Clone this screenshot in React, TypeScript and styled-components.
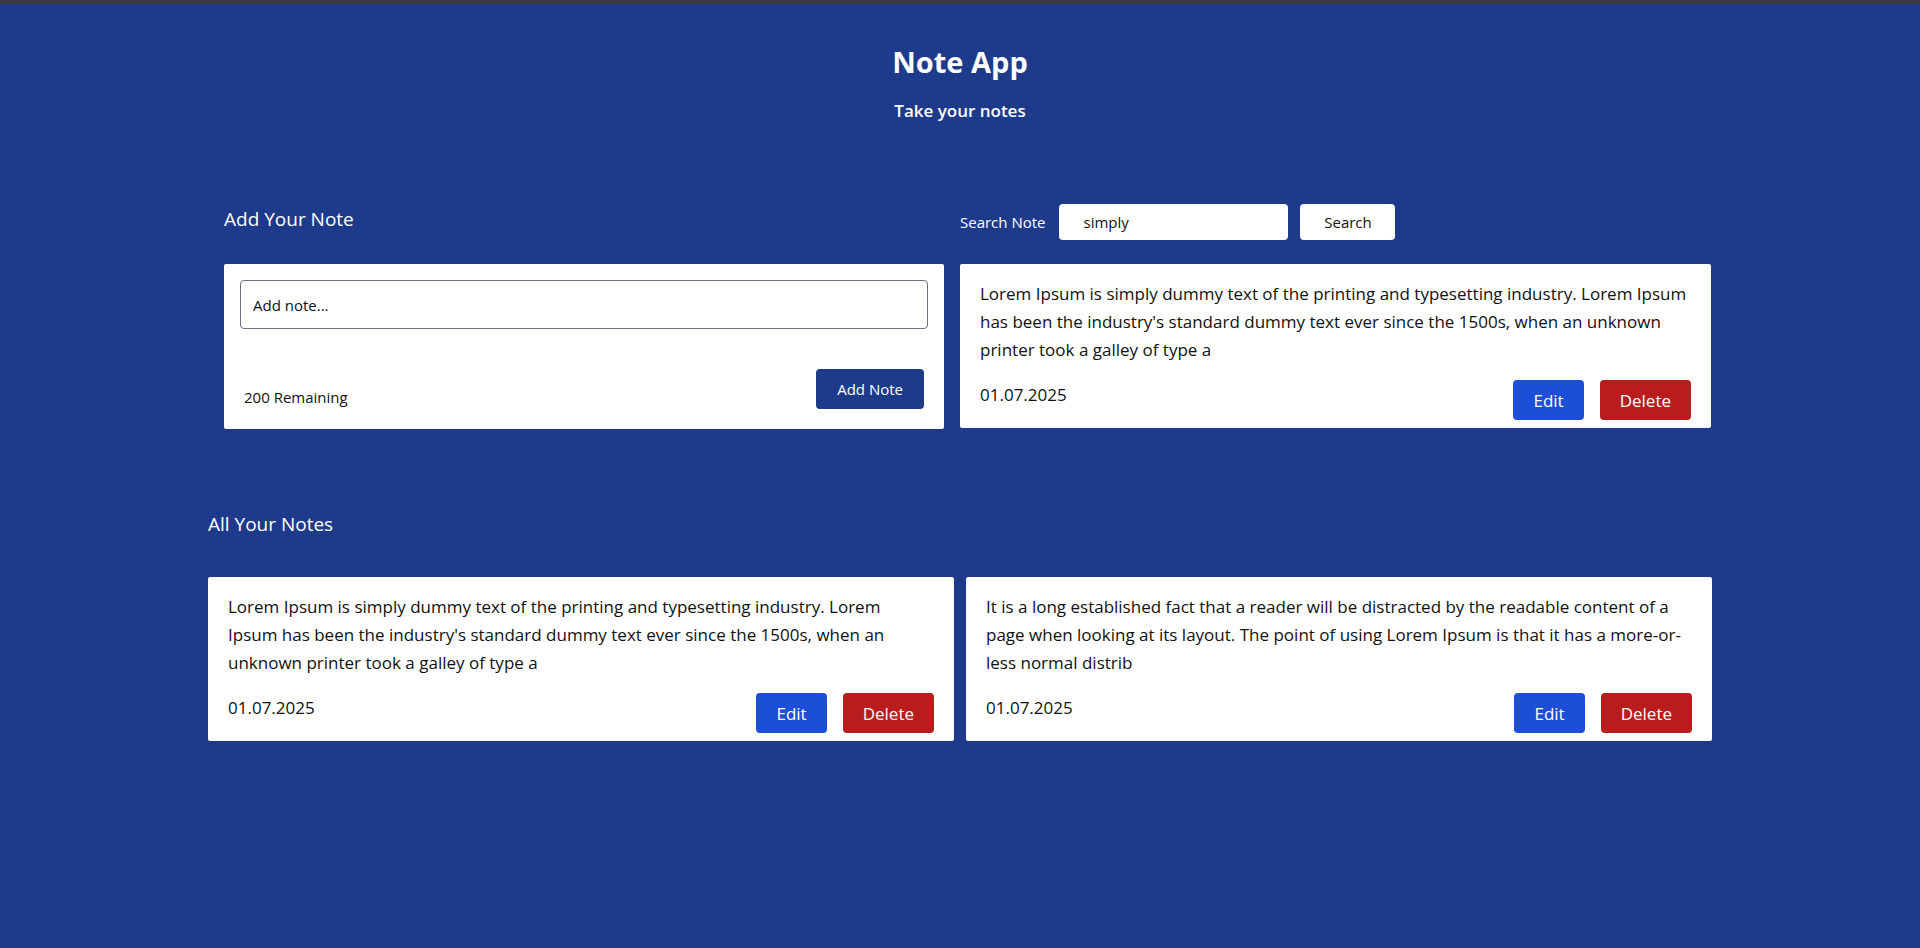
import React from "react";
import styled, { createGlobalStyle } from "styled-components";

const GlobalStyle = createGlobalStyle`
  * { box-sizing: border-box; }
  html, body {
    margin: 0;
    padding: 0;
    background: #1e3a8a;
    font-family: "Open Sans", "Noto Sans", sans-serif;
    color: #ffffff;
  }
  #root { min-height: 948px; }
`;

const TopStrip = styled.div`
  height: 4px;
  background: #3c3c3c;
`;

const Header = styled.header`
  padding-top: 40px;
  text-align: center;
`;

const Title = styled.h1`
  margin: 0;
  font-size: 29px;
  line-height: 36px;
  font-weight: 700;
  color: #ffffff;
`;

const Subtitle = styled.p`
  margin: 17px 0 0;
  font-size: 17px;
  line-height: 28px;
  font-weight: 600;
  color: #ffffff;
`;

const Container = styled.main`
  max-width: 1536px;
  margin: 0 auto;
  padding: 0 16px;
`;

const TopGrid = styled.section`
  margin-top: 79px;
  display: grid;
  grid-template-columns: 1fr 1fr;
  align-items: start;
`;

const Column = styled.div<{ $inset?: boolean }>`
  padding: ${(p) => (p.$inset ? "0 16px" : "0 1px 0 0")};
`;

const ColHead = styled.div`
  height: 36px;
  margin-bottom: 24px;
  display: flex;
  align-items: flex-start;
`;

const SectionTitle = styled.h2`
  margin: 0;
  padding-top: 1px;
  font-size: 19px;
  line-height: 28px;
  font-weight: 400;
  color: #ffffff;
`;

const SearchRow = styled.div`
  display: flex;
  align-items: center;
  height: 36px;
`;

const SearchLabel = styled.label`
  font-size: 15px;
  line-height: 24px;
  color: #ffffff;
  margin-right: 14px;
`;

const SearchInput = styled.input`
  width: 229px;
  height: 36px;
  border: none;
  border-radius: 4px;
  padding: 0 0 0 24px;
  font-family: inherit;
  font-size: 15px;
  color: #111111;
  background: #ffffff;
  outline: none;
`;

const SearchButton = styled.button`
  margin-left: 12px;
  width: 95px;
  height: 36px;
  border: none;
  border-radius: 4px;
  background: #ffffff;
  color: #111111;
  font-family: inherit;
  font-size: 15px;
  cursor: pointer;
`;

const Card = styled.div`
  background: #ffffff;
  border-radius: 2px;
  color: #111111;
`;

const AddCard = styled(Card)`
  padding: 16px 16px 20px 16px;
`;

const NoteInput = styled.input`
  display: block;
  width: 100%;
  height: 49px;
  border: 1px solid #6b7280;
  border-radius: 4px;
  padding: 0 12px;
  font-family: inherit;
  font-size: 15px;
  color: #111111;
  outline: none;
  &::placeholder { color: #111111; opacity: 1; }
`;

const AddFooter = styled.div`
  margin-top: 40px;
  padding: 0 4px;
  display: flex;
  justify-content: space-between;
  align-items: flex-end;
`;

const Remaining = styled.span`
  font-size: 15px;
  line-height: 24px;
`;

const Button = styled.button<{ $variant: "primary" | "edit" | "delete" }>`
  height: 40px;
  border: none;
  border-radius: 4px;
  color: #ffffff;
  font-family: inherit;
  cursor: pointer;
  background: ${(p) =>
    p.$variant === "primary" ? "#1e3a8a" : p.$variant === "edit" ? "#1d4ed8" : "#b91c1c"};
  font-size: ${(p) => (p.$variant === "primary" ? "15px" : "17px")};
  padding: ${(p) => (p.$variant === "primary" ? "0 21px" : "0 20px")};
`;

const NoteCardBox = styled(Card)`
  padding: 16px 20px 8px;
`;

const NoteText = styled.p`
  margin: 0;
  font-size: 17px;
  line-height: 28px;
`;

const NoteFooter = styled.div`
  margin-top: 16px;
  display: flex;
  justify-content: space-between;
  align-items: flex-start;
`;

const NoteDate = styled.span`
  font-size: 17px;
  line-height: 28px;
  padding-top: 1px;
`;

const Actions = styled.div`
  display: flex;
  gap: 16px;
`;

const BottomSection = styled.section`
  margin-top: 80px;
`;

const NotesGrid = styled.div`
  margin-top: 39px;
  display: grid;
  grid-template-columns: 1fr 1fr;
  gap: 12px;
  align-items: start;
`;

const lorem =
  "Lorem Ipsum is simply dummy text of the printing and typesetting industry. Lorem Ipsum has been the industry's standard dummy text ever since the 1500s, when an unknown printer took a galley of type a";
const longFact =
  "It is a long established fact that a reader will be distracted by the readable content of a page when looking at its layout. The point of using Lorem Ipsum is that it has a more-or-less normal distrib";

function NoteCard({ text, date }: { text: string; date: string }) {
  return (
    <NoteCardBox>
      <NoteText>{text}</NoteText>
      <NoteFooter>
        <NoteDate>{date}</NoteDate>
        <Actions>
          <Button $variant="edit">Edit</Button>
          <Button $variant="delete">Delete</Button>
        </Actions>
      </NoteFooter>
    </NoteCardBox>
  );
}

export default function App() {
  return (
    <>
      <GlobalStyle />
      <TopStrip />
      <Header>
        <Title>Note App</Title>
        <Subtitle>Take your notes</Subtitle>
      </Header>
      <Container>
        <TopGrid>
          <Column $inset>
            <ColHead>
              <SectionTitle>Add Your Note</SectionTitle>
            </ColHead>
            <AddCard>
              <NoteInput placeholder="Add note..." />
              <AddFooter>
                <Remaining>200 Remaining</Remaining>
                <Button $variant="primary">Add Note</Button>
              </AddFooter>
            </AddCard>
          </Column>
          <Column>
            <ColHead>
              <SearchRow>
                <SearchLabel>Search Note</SearchLabel>
                <SearchInput defaultValue="simply" />
                <SearchButton>Search</SearchButton>
              </SearchRow>
            </ColHead>
            <NoteCard text={lorem} date="01.07.2025" />
          </Column>
        </TopGrid>
        <BottomSection>
          <SectionTitle>All Your Notes</SectionTitle>
          <NotesGrid>
            <NoteCard text={lorem} date="01.07.2025" />
            <NoteCard text={longFact} date="01.07.2025" />
          </NotesGrid>
        </BottomSection>
      </Container>
    </>
  );
}
